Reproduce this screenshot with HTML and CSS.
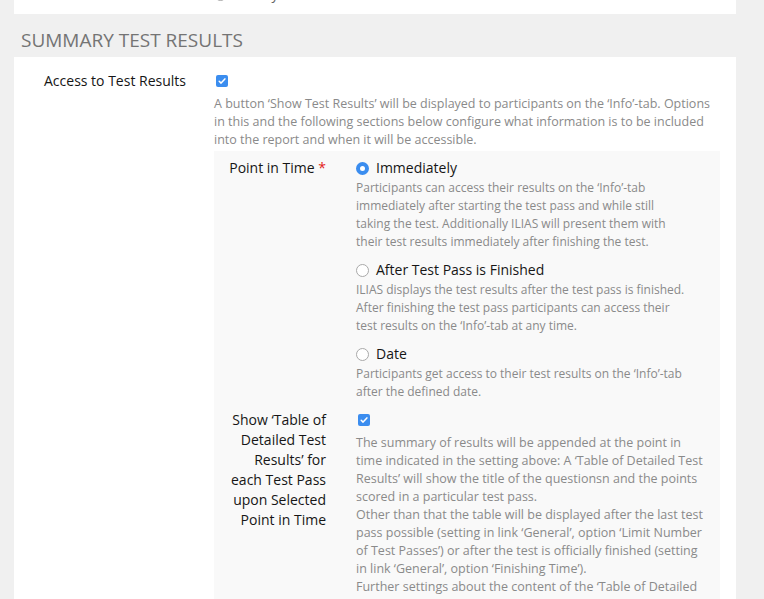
FILE: index.html
```html
<!DOCTYPE html>
<html>
<head>
<meta charset="utf-8">
<link rel="stylesheet" href="styles.css">
</head>
<body>
<div class="page">
  <div class="panel panel-top">
    <div class="grid">
      <div class="label"></div>
      <div class="control">
        <div class="option top-option"><span class="radio"></span><span class="opt-text">only show results after the test is finished</span></div>
      </div>
    </div>
  </div>

  <h2 class="section-title">SUMMARY TEST RESULTS</h2>

  <div class="panel panel-main">
    <div class="grid">
      <div class="label">Access to Test Results</div>
      <div class="control">
        <div class="check-line"><span class="checkbox"><svg viewBox="0 0 12 12" width="12" height="12"><path d="M3.2 6.3 L5.1 8.1 L8.9 3.9" fill="none" stroke="#fff" stroke-width="1.5" stroke-linecap="round" stroke-linejoin="round"/></svg></span></div>
        <p class="help">A button ‘Show Test Results’ will be displayed to participants on the ‘Info’-tab. Options<br>in this and the following sections below configure what information is to be included<br>into the report and when it will be accessible.</p>

        <div class="subpanel">
          <div class="subgrid">
            <div class="sublabel">Point in Time <span class="req">*</span></div>
            <div class="control">
              <div class="option"><span class="radio checked"></span><span class="opt-text">Immediately</span></div>
              <p class="help opt-help">Participants can access their results on the ‘Info’-tab<br>immediately after starting the test pass and while still<br>taking the test. Additionally ILIAS will present them with<br>their test results immediately after finishing the test.</p>
              <div class="option"><span class="radio"></span><span class="opt-text">After Test Pass is Finished</span></div>
              <p class="help opt-help">ILIAS displays the test results after the test pass is finished.<br>After finishing the test pass participants can access their<br>test results on the ‘Info’-tab at any time.</p>
              <div class="option"><span class="radio"></span><span class="opt-text">Date</span></div>
              <p class="help opt-help">Participants get access to their test results on the ‘Info’-tab<br>after the defined date.</p>
            </div>
          </div>
          <div class="subgrid">
            <div class="sublabel">Show ‘Table of Detailed Test Results’ for each Test Pass upon Selected Point in Time</div>
            <div class="control">
              <div class="check-line"><span class="checkbox"><svg viewBox="0 0 12 12" width="12" height="12"><path d="M3.2 6.3 L5.1 8.1 L8.9 3.9" fill="none" stroke="#fff" stroke-width="1.5" stroke-linecap="round" stroke-linejoin="round"/></svg></span></div>
              <p class="help">The summary of results will be appended at the point in<br>time indicated in the setting above: A ‘Table of Detailed Test<br>Results’ will show the title of the questionsn and the points<br>scored in a particular test pass.<br>Other than that the table will be displayed after the last test<br>pass possible (setting in link ‘General’, option ‘Limit Number<br>of Test Passes’) or after the test is officially finished (setting<br>in link ‘General’, option ‘Finishing Time’).<br>Further settings about the content of the ‘Table of Detailed<br>Test Results’ can be made in the section ‘Further Details’.</p>
            </div>
          </div>
        </div>
      </div>
    </div>
  </div>
</div>
</body>
</html>
```

FILE: styles.css
```css
html, body {
  margin: 0;
  padding: 0;
  background: #f0f0f0;
  font-family: "Open Sans", "DejaVu Sans", sans-serif;
  color: #161616;
  overflow: hidden;
}

.page {
  padding: 0 28px 0 14px;
  margin-top: -16px;
}

.panel {
  background: #fff;
}

.panel-top {
  padding-bottom: 10px;
}

.panel-main {
  padding-top: 14px;
  height: 700px;
}

.grid {
  display: grid;
  grid-template-columns: 140px 1fr;
  column-gap: 30px;
  padding-left: 30px;
  padding-right: 16px;
}

.label {
  font-size: 14px;
  line-height: 20px;
  text-align: left;
  white-space: nowrap;
}

.section-title {
  margin: 14px 0 5px 7px;
  font-size: 19px;
  line-height: 24px;
  font-weight: 400;
  color: #747474;
}

.check-line {
  height: 20px;
  display: flex;
  align-items: center;
  padding-left: 2px;
}

.checkbox {
  width: 12px;
  height: 12px;
  border-radius: 2px;
  background: #3b8def;
  display: block;
}

.checkbox svg {
  display: block;
}

.help {
  margin: 4px 0 0 0;
  font-size: 12.5px;
  line-height: 18px;
  color: #8a8a8a;
}

.subpanel {
  margin-top: 2px;
  background: #f9f9f9;
  padding: 7px 0 0 12px;
}

.subgrid {
  display: grid;
  grid-template-columns: 100px 1fr;
  column-gap: 30px;
  margin-bottom: 9px;
}

.sublabel {
  font-size: 14px;
  line-height: 20px;
  text-align: right;
}

.req {
  color: #e31b1b;
}

.option {
  display: flex;
  align-items: center;
  height: 20px;
  font-size: 14px;
  line-height: 20px;
  color: #161616;
}

.help.opt-help {
  font-size: 12px;
  margin: 1px 0 9px 0;
}

.help.opt-help:last-child {
  margin-bottom: 0;
}

.radio {
  width: 13px;
  height: 13px;
  box-sizing: border-box;
  border: 1px solid #a9a9a9;
  border-radius: 50%;
  background: #fff;
  margin-right: 7px;
  flex: none;
}

.radio.checked {
  border: 4.5px solid #3b8def;
  background: #fff;
}

.top-option {
  color: #666;
}

.top-option .radio {
  margin-right: 24px;
}
```
